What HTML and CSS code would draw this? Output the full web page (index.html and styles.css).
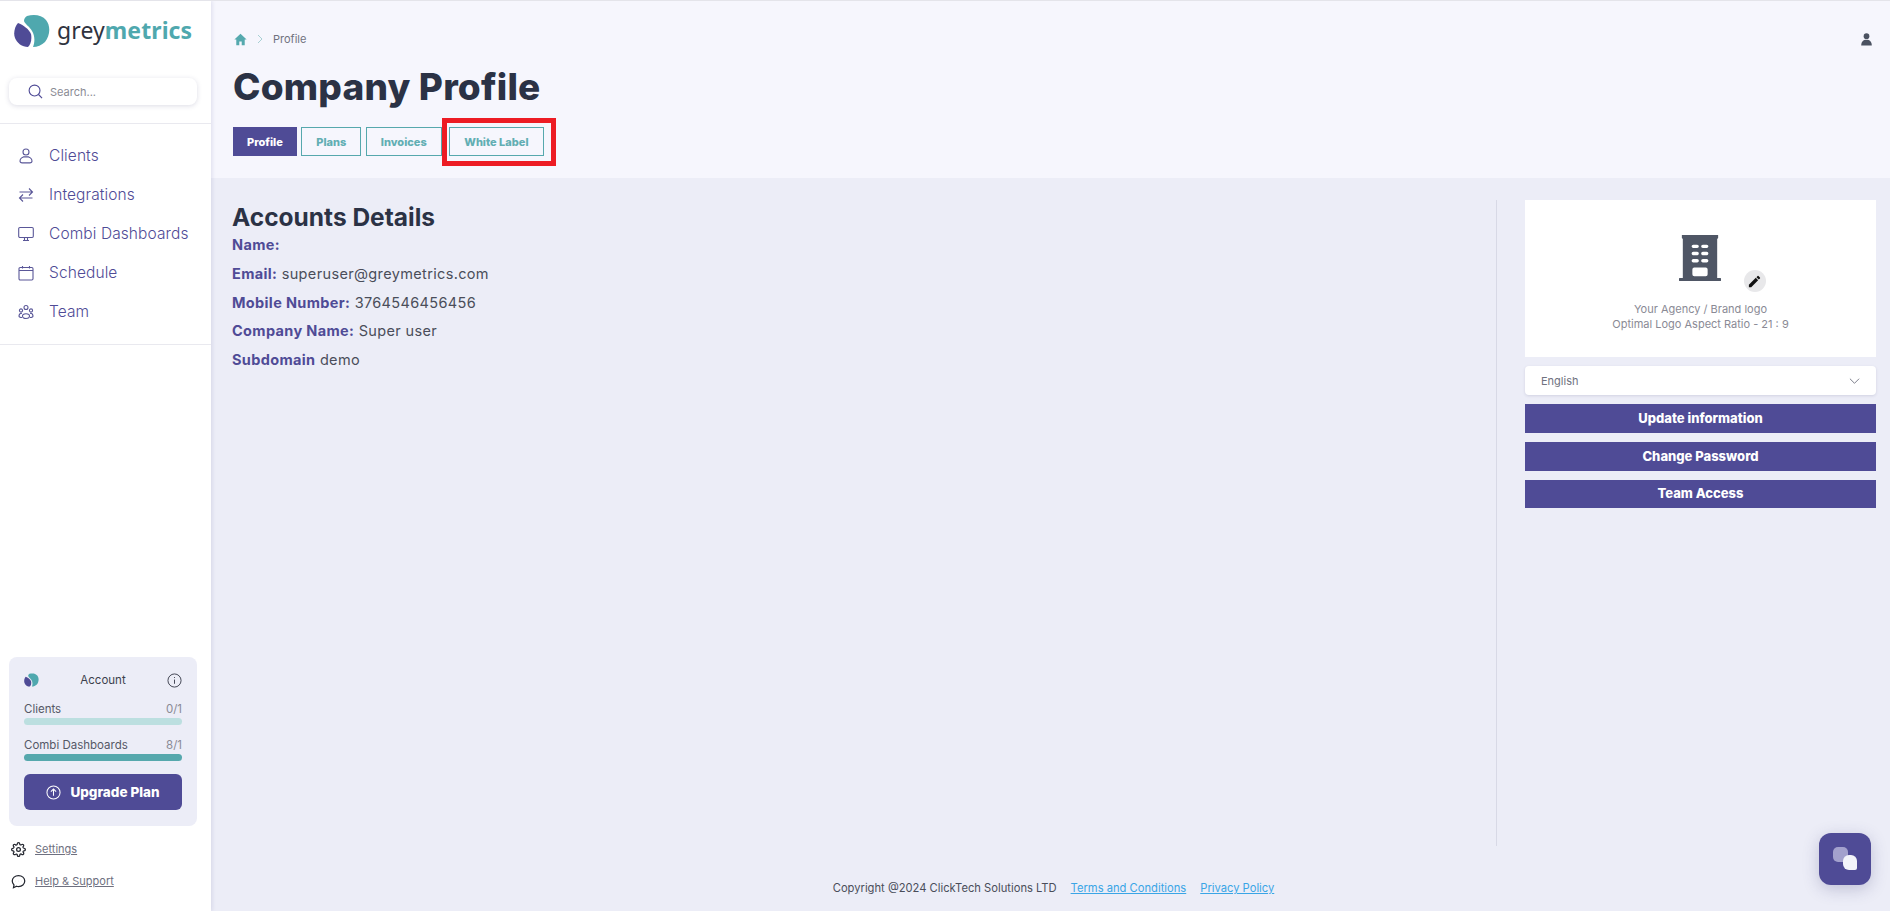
FILE: index.html
```html
<!DOCTYPE html>
<html lang="en">
<head>
    <meta charset="UTF-8">
    <title>Company Profile</title>
    <link rel="stylesheet" href="styles.css">
</head>
<body>
    <div class="app">
        <aside class="sidebar">
            <div class="brand">
                <svg class="brand-logo" viewBox="0 0 36 34"><path fill="#4fa8ae" d="M13 2C20 0 28 1 32 6C37 12 36 22 31 28C28 31 23 33 19 33C21 28 21 22 18 17C16 13 11 10 10 7C10 5 11 3 13 2z"/><path fill="#4f4b96" d="M4 9C9 11 15 15 17 20C18 25 17 30 14 33C8 33 3 29 1 24C-1 19 1 12 4 9z"/></svg>
                <span class="brand-name">grey<b>metrics</b></span>
            </div>
            <div class="search">
                <svg class="search-icon" viewBox="0 0 16 16"><circle cx="7" cy="7" r="5.8"/><path d="M11.2 11.2L15 15"/></svg>
                <span>Search...</span>
            </div>
            <nav class="nav">
                <a class="nav-item">
                    <svg viewBox="0 0 16 16"><circle cx="8" cy="4" r="3"/><path d="M8 8.6c-3.5 0-6 2-6 4.4 0 1.300 1 1.900 2.200 1.900h7.600c1.200 0 2.200-.6 2.200-1.900 0-2.400-2.500-4.400-6-4.400z"/></svg>
                    Clients
                </a>
                <a class="nav-item">
                    <svg viewBox="0 0 16 16"><path d="M1.500 5h13M11 1.500L14.500 5 11 8.500M14.500 11h-13M5 7.500L1.500 11 5 14.500"/></svg>
                    Integrations
                </a>
                <a class="nav-item">
                    <svg viewBox="0 0 16 16"><rect x=".7" y="1.500" width="14.600" height="10" rx="1.200"/><path d="M5 14.500h6M6.500 11.500v3M9.500 11.500v3"/></svg>
                    Combi Dashboards
                </a>
                <a class="nav-item">
                    <svg viewBox="0 0 16 16"><rect x="1" y="2.500" width="14" height="12.500" rx="1.200"/><path d="M1 5.500h14M4.500 1v2.500M11.500 1v2.500"/></svg>
                    Schedule
                </a>
                <a class="nav-item">
                    <svg viewBox="0 0 16 16"><circle cx="8" cy="3.500" r="2"/><circle cx="3" cy="6.500" r="1.600"/><circle cx="13" cy="6.500" r="1.600"/><path d="M1 12c0-2 1.500-2.800 3-2.800M15 12c0-2-1.500-2.800-3-2.800M4.500 12c0-3 7-3 7 0 0 2-1.800 2.500-3.500 2.500s-3.500-.5-3.500-2.500zM1 12c0 1 1 1.500 3 1.500M15 12c0 1-1 1.500-3 1.500"/></svg>
                    Team
                </a>
            </nav>
            <div class="account">
                <div class="account-head">
                    <svg class="account-logo" viewBox="0 0 36 34"><path fill="#4fa8ae" d="M13 2C20 0 28 1 32 6C37 12 36 22 31 28C28 31 23 33 19 33C21 28 21 22 18 17C16 13 11 10 10 7C10 5 11 3 13 2z"/><path fill="#4f4b96" d="M4 9C9 11 15 15 17 20C18 25 17 30 14 33C8 33 3 29 1 24C-1 19 1 12 4 9z"/></svg>
                    <span class="account-title">Account</span>
                    <svg class="info-icon" viewBox="0 0 16 16"><circle cx="8" cy="8" r="7"/><path d="M8 7v4.500M8 4.300v1"/></svg>
                </div>
                <div class="usage">
                    <div class="usage-row"><span>Clients</span><span class="usage-count">0/1</span></div>
                    <div class="bar bar-light"></div>
                </div>
                <div class="usage">
                    <div class="usage-row"><span>Combi Dashboards</span><span class="usage-count">8/1</span></div>
                    <div class="bar"></div>
                </div>
                <button class="upgrade">
                    <svg viewBox="0 0 16 16"><circle cx="8" cy="8" r="7"/><path d="M8 11.500v-7M5.200 7L8 4.300 10.800 7"/></svg>
                    Upgrade Plan
                </button>
            </div>
            <div class="side-links">
                <a class="side-link">
                    <svg viewBox="0 0 24 24"><circle cx="12" cy="12" r="3"/><path d="M19.400 15a1.650 1.650 0 0 0 .33 1.820l.06.06a2 2 0 0 1 0 2.830 2 2 0 0 1-2.830 0l-.06-.06a1.650 1.650 0 0 0-1.820-.33 1.650 1.650 0 0 0-1 1.510V21a2 2 0 0 1-2 2 2 2 0 0 1-2-2v-.09A1.650 1.650 0 0 0 9 19.400a1.650 1.650 0 0 0-1.820.33l-.06.06a2 2 0 0 1-2.830 0 2 2 0 0 1 0-2.830l.06-.06a1.650 1.650 0 0 0 .33-1.820 1.650 1.650 0 0 0-1.510-1H3a2 2 0 0 1-2-2 2 2 0 0 1 2-2h.09A1.650 1.650 0 0 0 4.600 9a1.650 1.650 0 0 0-.33-1.820l-.06-.06a2 2 0 0 1 0-2.830 2 2 0 0 1 2.830 0l.06.06a1.650 1.650 0 0 0 1.820.33H9a1.650 1.650 0 0 0 1-1.510V3a2 2 0 0 1 2-2 2 2 0 0 1 2 2v.09a1.650 1.650 0 0 0 1 1.510 1.650 1.650 0 0 0 1.820-.33l.06-.06a2 2 0 0 1 2.830 0 2 2 0 0 1 0 2.830l-.06.06a1.650 1.650 0 0 0-.33 1.820V9a1.650 1.650 0 0 0 1.510 1H21a2 2 0 0 1 2 2 2 2 0 0 1-2 2h-.09a1.650 1.650 0 0 0-1.510 1z"/></svg>
                    <span>Settings</span>
                </a>
                <a class="side-link">
                    <svg viewBox="0 0 24 24"><path d="M12 2.500c5.600 0 10 3.800 10 8.800s-4.400 8.700-10 8.700c-1 0-2-.1-3-.4L4 22l.8-4.500C3 15.900 2 13.700 2 11.300c0-5 4.400-8.800 10-8.800z"/><path d="M7.500 11.300h.1M12 11.300h.1M16.500 11.300h.1"/></svg>
                    <span>Help &amp; Support</span>
                </a>
            </div>
        </aside>

        <div class="page">
            <header class="page-head">
                <div class="topline">
                    <div class="crumbs">
                        <svg class="home-icon" viewBox="0 0 16 16"><path d="M8 1L.5 8h2.300v7h3.700v-4.500h3V15h3.700V8h2.300z"/></svg>
                        <svg class="crumb-sep" viewBox="0 0 8 12"><path d="M2 2l4 4-4 4"/></svg>
                        <span>Profile</span>
                    </div>
                    <svg class="user-icon" viewBox="0 0 16 16"><circle cx="8" cy="4.500" r="3.500"/><path d="M1.500 16c0-4.500 2.500-7 6.500-7s6.500 2.500 6.500 7z"/></svg>
                </div>
                <h1>Company Profile</h1>
                <div class="tabs">
                    <a class="tab active">Profile</a>
                    <a class="tab">Plans</a>
                    <a class="tab">Invoices</a>
                    <a class="tab tab-marked">White Label<i class="red-box"></i></a>
                </div>
            </header>

            <main class="content">
                <section class="details">
                    <h2>Accounts Details</h2>
                    <p><strong>Name:</strong></p>
                    <p><strong>Email:</strong> superuser@greymetrics.com</p>
                    <p><strong>Mobile Number:</strong> 3764546456456</p>
                    <p><strong>Company Name:</strong> Super user</p>
                    <p><strong>Subdomain</strong> demo</p>
                </section>
                <section class="side-col">
                    <div class="logo-card">
                        <div class="logo-wrap">
                            <svg class="building" viewBox="0 0 44 48"><path fill-rule="evenodd" d="M3 0h38v3l-1 1v41h3a1.500 1.500 0 0 1 0 3H1a1.500 1.500 0 0 1 0-3h3V4L3 3zM15 10a1.800 1.800 0 0 0 0 3.600h4a1.800 1.800 0 0 0 0-3.600zm10 0a1.800 1.800 0 0 0 0 3.600h4a1.800 1.800 0 0 0 0-3.600zM15 17.500a1.800 1.800 0 0 0 0 3.600h4a1.800 1.800 0 0 0 0-3.600zm10 0a1.800 1.800 0 0 0 0 3.600h4a1.800 1.800 0 0 0 0-3.600zM15 25a1.800 1.800 0 0 0 0 3.600h4a1.800 1.800 0 0 0 0-3.600zm10 0a1.800 1.800 0 0 0 0 3.600h4a1.800 1.800 0 0 0 0-3.600zM16 34a2 2 0 0 0-2 2v5a2 2 0 0 0 2 2h12a2 2 0 0 0 2-2v-5a2 2 0 0 0-2-2z"/></svg>
                            <span class="edit-btn"><svg viewBox="0 0 24 24"><path d="M3 17.250V21h3.750L17.810 9.940l-3.750-3.750L3 17.250zM20.710 7.040a1 1 0 0 0 0-1.410l-2.340-2.340a1 1 0 0 0-1.410 0l-1.830 1.830 3.750 3.750 1.830-1.830z"/></svg></span>
                        </div>
                        <p>Your Agency / Brand logo</p>
                        <p>Optimal Logo Aspect Ratio - 21 : 9</p>
                    </div>
                    <div class="lang-select">
                        <span>English</span>
                        <svg viewBox="0 0 12 8"><path d="M1 1.500l5 5 5-5"/></svg>
                    </div>
                    <button class="action">Update information</button>
                    <button class="action">Change Password</button>
                    <button class="action">Team Access</button>
                </section>
            </main>

            <footer class="footer">
                <span>Copyright @2024 ClickTech Solutions LTD</span>
                <a>Terms and Conditions</a>
                <a>Privacy Policy</a>
            </footer>
        </div>
    </div>

    <button class="chat-btn"><i class="chat-back"></i><i class="chat-front"></i></button>
</body>
</html>
```

FILE: styles.css
```css
* {
    box-sizing: border-box;
}
body {
    margin: 0;
    font-family: Inter, "Noto Sans", sans-serif;
    color: #2b3245;
    background: #ecedf7;
}
svg {
    display: block;
    flex: none;
}
.app {
    display: flex;
    height: 911px;
    border-top: 1px solid #e4e4ea;
    overflow: hidden;
}

/* sidebar */
.sidebar {
    width: 211px;
    flex: none;
    display: flex;
    flex-direction: column;
    background: white;
    box-shadow: 1px 0 4px rgba(80,80,140,0.15);
    position: relative;
}
.brand {
    display: flex;
    align-items: flex-start;
    gap: 7px;
    padding: 13px 0 0 14px;
    height: 77px;
}
.brand-logo {
    width: 36px;
    height: 34px;
}
.brand-name {
    font-size: 23px;
    line-height: 32px;
    color: #2f3340;
    font-family: "Noto Sans", sans-serif;
    letter-spacing: 0.1px;
}
.brand-name b {
    color: #4fa8ae;
    font-weight: 700;
}
.search {
    margin-left: 9px;
    width: 188px;
    height: 27px;
    display: flex;
    align-items: center;
    gap: 7px;
    padding-left: 19px;
    background: white;
    border-radius: 8px;
    box-shadow: 0 1px 5px rgba(60,60,110,0.18);
    font-size: 11px;
    color: #8b8b95;
}
.search-icon {
    width: 15px;
    height: 15px;
    fill: none;
    stroke: #4f4b96;
    stroke-width: 1.200;
}
.nav {
    margin-top: 18px;
    padding: 12px 0;
    height: 222px;
    border-top: 1px solid #e9e9ef;
    border-bottom: 1px solid #e9e9ef;
}
.nav-item {
    display: flex;
    align-items: center;
    gap: 15px;
    height: 39px;
    padding-left: 18px;
    font-size: 15.500px;
    font-weight: 300;
    letter-spacing: 0.1px;
    color: #4f4b96;
}
.nav-item svg {
    width: 16px;
    height: 16px;
    fill: none;
    stroke: #5a5798;
    stroke-width: 1.100;
}
.account {
    margin: auto 0 0 9px;
    width: 188px;
    height: 169px;
    padding: 15px 15px 0;
    background: #ecedf7;
    border-radius: 8px;
}
.account-head {
    display: flex;
    align-items: center;
    justify-content: space-between;
    height: 16px;
    margin-bottom: 14px;
    font-size: 11.500px;
    color: #3c3f4d;
}
.account-logo {
    width: 15px;
    height: 14px;
}
.info-icon {
    width: 15px;
    height: 15px;
    fill: none;
    stroke: #3c3f4d;
    stroke-width: 1;
}
.usage {
    margin-bottom: 13px;
}
.usage-row {
    display: flex;
    justify-content: space-between;
    font-size: 11.500px;
    line-height: 15px;
    margin-bottom: 1px;
    color: #555866;
}
.usage-count {
    color: #8a8a95;
}
.bar {
    height: 7px;
    border-radius: 4px;
    background: #56a8ad;
}
.bar-light {
    background: #bcdfe0;
}
.upgrade {
    display: flex;
    align-items: center;
    justify-content: center;
    gap: 9px;
    width: 100%;
    height: 36px;
    margin-top: 2px;
    border: none;
    border-radius: 6px;
    background: #4f4b96;
    color: white;
    font-family: inherit;
    font-size: 13.500px;
    font-weight: 800;
}
.upgrade svg {
    width: 15px;
    height: 15px;
    fill: none;
    stroke: white;
    stroke-width: 1.100;
}
.side-links {
    padding: 7px 0 14px 11px;
}
.side-link {
    display: flex;
    align-items: center;
    gap: 9px;
    height: 32px;
    font-size: 11px;
    color: #6e7080;
}
.side-link span {
    text-decoration: underline;
}
.side-link svg {
    width: 15px;
    height: 15px;
    fill: none;
    stroke: #23262f;
    stroke-width: 2;
}

/* main area */
.page {
    flex: 1;
    min-width: 0;
    display: flex;
    flex-direction: column;
}
.page-head {
    height: 177px;
    padding: 29px 17px 0 22px;
    background: #f6f6fd;
}
.topline {
    display: flex;
    align-items: center;
    justify-content: space-between;
    height: 18px;
}
.crumbs {
    display: flex;
    align-items: center;
    font-size: 11px;
    color: #70727f;
    padding-left: 1px;
}
.home-icon {
    width: 13px;
    height: 13px;
    fill: #55a9ae;
}
.crumb-sep {
    width: 8px;
    height: 12px;
    margin: 0 9px;
    fill: none;
    stroke: #a8d0d4;
    stroke-width: 1;
}
.user-icon {
    width: 13px;
    height: 16px;
    fill: #4b5261;
}
h1 {
    margin: 14px 0 0;
    font-size: 37px;
    line-height: 50px;
    font-weight: 800;
    color: #2b3245;
    letter-spacing: 0.2px;
}
.tabs {
    display: flex;
    gap: 4.500px;
    margin: 15px 0 0;
}
.tab {
    height: 29px;
    display: flex;
    align-items: center;
    padding: 0 14px;
    border: 1px solid #56a8ad;
    font-size: 11px;
    font-weight: 800;
    color: #62aeb3;
}
.tab.active {
    padding: 0 13px;
    background: #4f4b96;
    border-color: #4f4b96;
    color: white;
}
.tab-marked {
    position: relative;
    margin-left: 3px;
}
.red-box {
    position: absolute;
    left: -8px;
    right: -13px;
    top: -10px;
    bottom: -11px;
    border: 5px solid #ed1c24;
}

.content {
    flex: 1;
    min-height: 0;
    display: flex;
    padding: 22px 14px 0 21px;
}
.details {
    flex: 1;
    height: 646px;
    border-right: 1px solid #d8d9e6;
}
h2 {
    margin: 3px 0 0;
    font-size: 24.500px;
    line-height: 28px;
    font-weight: 700;
    color: #2b3245;
}
.details p {
    margin: 0;
    font-size: 14.500px;
    line-height: 28.800px;
    letter-spacing: 0.35px;
    color: #4a4d5a;
}
.details strong {
    color: #4f4b96;
    font-weight: 700;
}
.side-col {
    width: 379px;
    flex: none;
    padding-left: 28px;
    display: flex;
    flex-direction: column;
    gap: 9px;
}
.logo-card {
    height: 157px;
    padding-top: 34px;
    background: white;
    text-align: center;
}
.logo-card p {
    margin: 0;
    font-size: 11px;
    line-height: 15px;
    color: #8a8a95;
}
.logo-wrap {
    position: relative;
    width: 44px;
    height: 48px;
    margin: 0 auto 20px;
}
.building {
    width: 42px;
    height: 48px;
    fill: #4f5665;
}
.edit-btn {
    position: absolute;
    left: 65px;
    top: 36px;
    width: 22px;
    height: 22px;
    border-radius: 50%;
    background: #e8e8ea;
    display: flex;
    align-items: center;
    justify-content: center;
}
.edit-btn svg {
    width: 15px;
    height: 15px;
    fill: #111;
}
.lang-select {
    height: 29px;
    display: flex;
    align-items: center;
    justify-content: space-between;
    padding: 0 16px;
    background: white;
    border-radius: 4px;
    box-shadow: 0 1px 3px rgba(60,60,110,0.15);
    font-size: 11px;
    color: #70727f;
}
.lang-select svg {
    width: 11px;
    height: 8px;
    fill: none;
    stroke: #70727f;
    stroke-width: 1;
}
.action {
    height: 29px;
    padding: 0 0 2px;
    border: none;
    background: #4f4b96;
    color: white;
    font-family: inherit;
    font-size: 13px;
    font-weight: 800;
}
.action:last-child {
    height: 28px;
}

.footer {
    height: 47px;
    display: flex;
    justify-content: center;
    gap: 14px;
    padding: 16px 0 0 6px;
    font-size: 11.200px;
    line-height: 17px;
    color: #4a4d5a;
}
.footer a {
    color: #3aa5e6;
    text-decoration: underline;
}

.chat-btn {
    position: fixed;
    left: 1819px;
    top: 833px;
    width: 52px;
    height: 52px;
    border: none;
    border-radius: 12px;
    background: #4f4b96;
    box-shadow: 0 4px 16px rgba(60,60,120,0.25);
}
.chat-back {
    position: absolute;
    left: 14px;
    top: 14px;
    width: 15px;
    height: 15px;
    border-radius: 5px 5px 0 5px;
    background: #a3a1cd;
}
.chat-front {
    position: absolute;
    left: 24px;
    top: 22px;
    width: 14px;
    height: 15px;
    border-radius: 6px 6px 2px 6px;
    background: #f3f4fa;
}
```
